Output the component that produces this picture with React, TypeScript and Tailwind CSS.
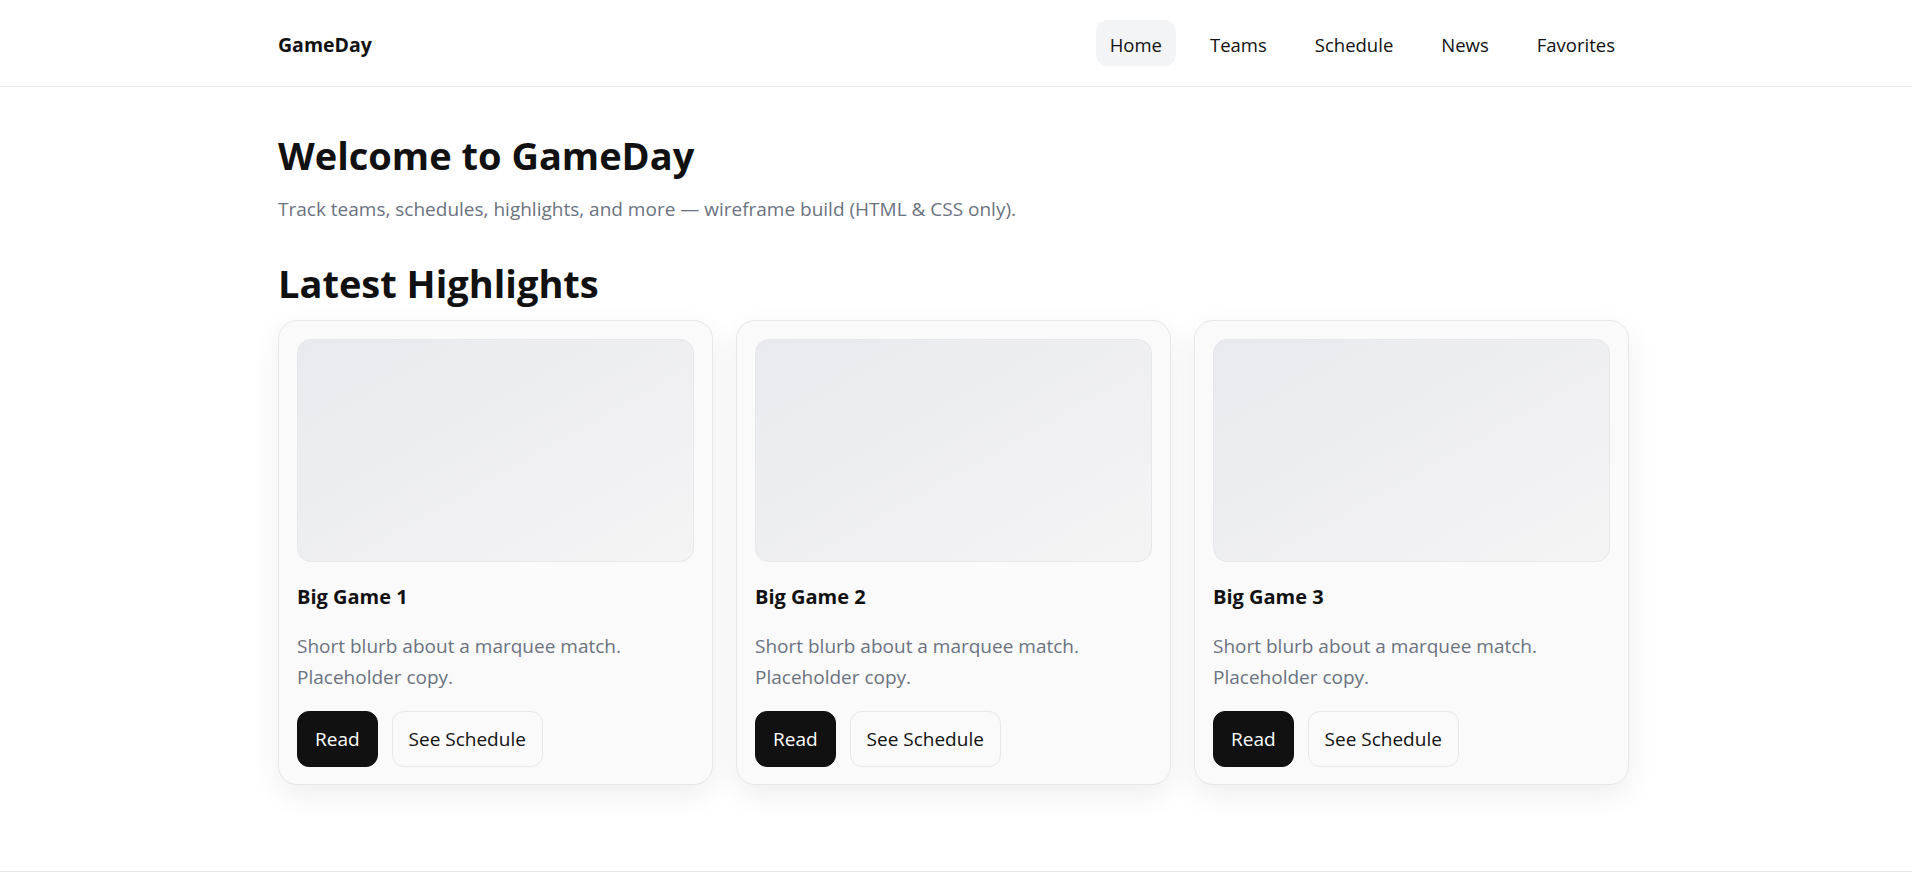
import { type ReactNode } from 'react'

const navLinks = ['Home', 'Teams', 'Schedule', 'News', 'Favorites']

const highlights = [
  { id: 1, title: 'Big Game 1' },
  { id: 2, title: 'Big Game 2' },
  { id: 3, title: 'Big Game 3' },
]

function Container({ children }: { children: ReactNode }) {
  return <div className="mx-auto w-[1356px]">{children}</div>
}

function HighlightCard({ title }: { title: string }) {
  return (
    <article className="rounded-[19px] border border-[#e5e7eb] bg-[#fafafa] px-[18px] pb-[17px] pt-[18px] shadow-[0_10px_30px_rgba(0,0,0,0.07)]">
      {/* media placeholder */}
      <div className="h-[223px] rounded-[14px] border border-[#e5e7eb] bg-gradient-to-br from-[#e9eaed] to-[#f4f4f5]" />
      <h3 className="mt-[22px] text-[20px] font-bold leading-[26px] text-[#111]">{title}</h3>
      <p className="mt-[21px] text-[19px] leading-[31px] text-[#6b7280]">
        Short blurb about a marquee match. Placeholder copy.
      </p>
      <div className="mt-[18px] flex gap-[14px]">
        <button className="h-[56px] rounded-[12px] border border-[#111] bg-[#111] px-[17px] text-[19px] text-white">
          Read
        </button>
        <button className="h-[56px] rounded-[12px] border border-[#e5e7eb] bg-[#fafafa] px-[16px] text-[19px] text-[#111]">
          See Schedule
        </button>
      </div>
    </article>
  )
}

export default function App() {
  return (
    <div className="min-h-screen bg-white font-['Open_Sans',sans-serif] text-[#111]">
      {/* Header */}
      <header className="border-b border-[#e5e7eb]">
        <Container>
          <div className="flex h-[86px] items-center justify-between">
            <span className="pt-[3px] text-[19.5px] font-bold">GameDay</span>
            <nav className="flex gap-[20px] pr-[5px]">
              {navLinks.map((link) => (
                <a
                  key={link}
                  href="#"
                  className={
                    link === 'Home'
                      ? 'rounded-[12px] bg-[#f3f4f6] px-[14px] pb-[6px] pt-[10px] text-[18.5px] leading-[30px]'
                      : 'rounded-[12px] px-[14px] pb-[6px] pt-[10px] text-[18.5px] leading-[30px]'
                  }
                >
                  {link}
                </a>
              ))}
            </nav>
          </div>
        </Container>
      </header>

      <main className="pb-[86px] pt-[43px]">
        <Container>
          <h1 className="text-[38px] font-bold leading-[50px]">Welcome to GameDay</h1>
          <p className="mt-[14px] text-[19px] leading-[30px] text-[#6b7280]">
            Track teams, schedules, highlights, and more — wireframe build (HTML &amp; CSS only).
          </p>

          <h2 className="mt-[34px] text-[38px] font-bold leading-[50px]">Latest Highlights</h2>
          <div className="mt-[12px] grid grid-cols-[repeat(3,435px)] gap-[23px]">
            {highlights.map((h) => (
              <HighlightCard key={h.id} title={h.title} />
            ))}
          </div>
        </Container>
      </main>

      <footer className="h-[40px] border-t border-[#e5e7eb]" />
    </div>
  )
}
